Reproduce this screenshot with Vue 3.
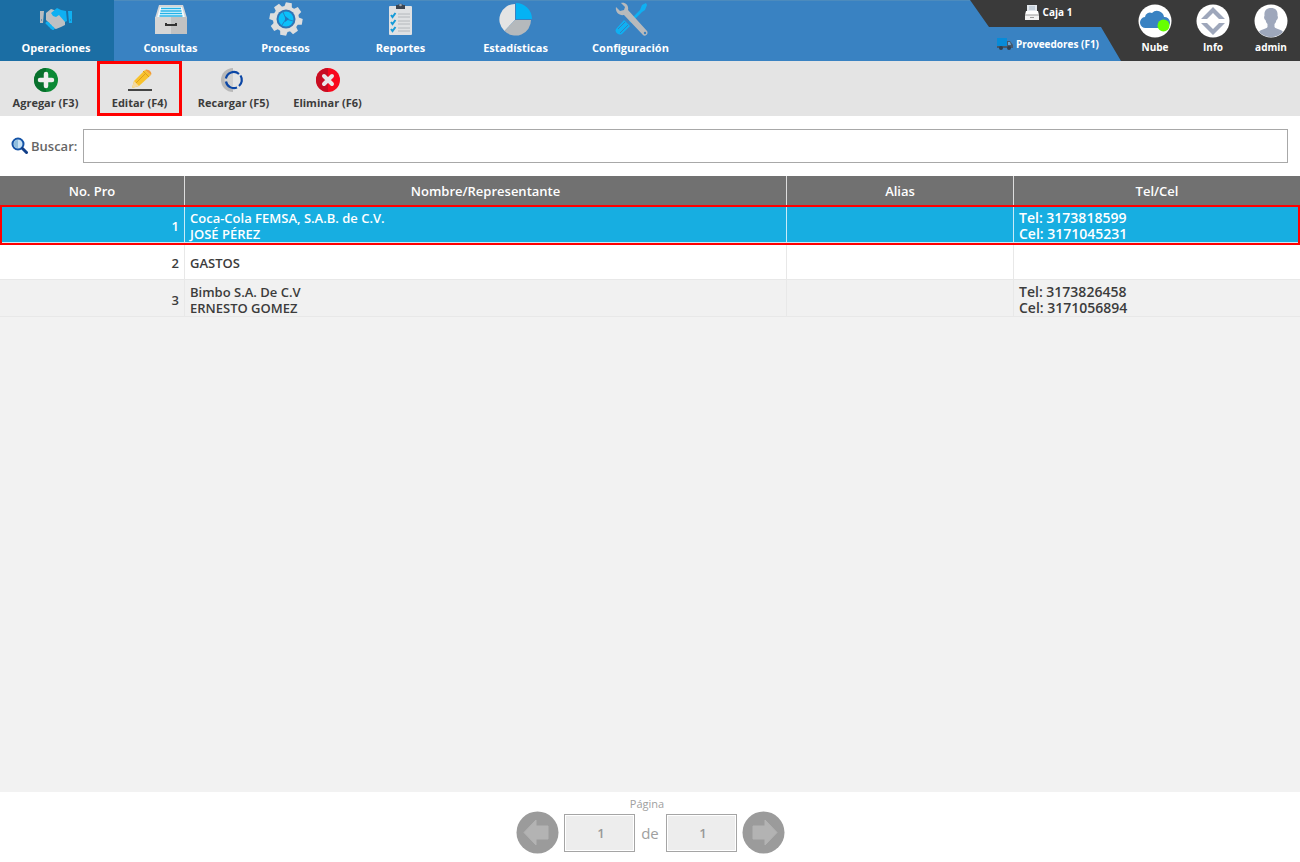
<script setup>
import { ref } from 'vue'

const query = ref('')
const menu = [
  { id: 'ops', label: 'Operaciones' },
  { id: 'con', label: 'Consultas' },
  { id: 'pro', label: 'Procesos' },
  { id: 'rep', label: 'Reportes' },
  { id: 'est', label: 'Estadísticas' },
  { id: 'cfg', label: 'Configuración' }
]
const tools = [
  { id: 'add', label: 'Agregar (F3)' },
  { id: 'edit', label: 'Editar (F4)' },
  { id: 'reload', label: 'Recargar (F5)' },
  { id: 'delete', label: 'Eliminar (F6)' }
]
const rows = [
  { no: 1, name: ['Coca-Cola FEMSA, S.A.B. de C.V.', 'JOSÉ PÉREZ'], alias: '', tel: ['Tel: 3173818599', 'Cel: 3171045231'] },
  { no: 2, name: ['GASTOS'], alias: '', tel: [] },
  { no: 3, name: ['Bimbo S.A. De C.V', 'ERNESTO GOMEZ'], alias: '', tel: ['Tel: 3173826458', 'Cel: 3171056894'] }
]
const teeth = [0, 45, 90, 135, 180, 225, 270, 315]
</script>

<template>
  <div class="app">
    <header class="top">
      <nav class="menu">
        <button v-for="m in menu" :key="m.id" type="button" class="menu-item" :class="{ active: m.id === 'ops' }">
          <svg v-if="m.id === 'ops'" class="icon" viewBox="0 0 36 36">
            <path d="M2 11h4l-1 12H2z" fill="#b8bcc0" />
            <path d="M30 11h4v12h-3z" fill="#0fb0f2" />
            <path d="M3 20h1M32 20h1" stroke="#1b6ea4" />
            <path d="M8 13l5-4 6 2 8 9v5l-4 2-5 2-3-1-5-6-2-2z" fill="#bdc0c3" />
            <path d="M13 13l6-5 4 2 5 1 1 10-2 1-6-7-3 2-3-1z" fill="#0fb0f2" />
            <path d="M9 23l1.500 1M11 25l1.500 1M13 27l2 1.500" stroke="#0fb0f2" stroke-width="3" stroke-linecap="round" />
          </svg>
          <svg v-else-if="m.id === 'con'" class="icon" viewBox="0 0 36 36">
            <path d="M6 5h24l4 13H2z" fill="#d4d6d8" />
            <path d="M7 7h22l3 11H4z" fill="#f2fbff" />
            <path d="M8 8.500h20M7.500 11h21M7 13.500h22M6.500 16h23" stroke="#23b2e8" stroke-width="1.500" />
            <path d="M2 17h32v17H2z" fill="#d6d6d6" />
            <path d="M18 17h16v17H18z" fill="#c2c2c2" />
            <path d="M13 23v2h10v-2" fill="none" stroke="#333" stroke-width="2" />
          </svg>
          <svg v-else-if="m.id === 'pro'" class="icon" viewBox="0 0 36 36">
            <g transform="translate(18 19)">
              <path v-for="t in teeth" :key="t" d="M-4-11l1-5.500h6l1 5.500z" :transform="`rotate(${t + 10})`" fill="#dedede" />
              <circle r="13" fill="#dedede" />
              <circle r="9.500" fill="#2f75b5" />
              <circle r="7.500" fill="#0bc0fa" />
              <path d="M0 0L-3-7M0 0L7 2M0 0L-4 6" stroke="#2382c4" />
              <path d="M-1-3l4 3-4 3z" fill="#2478bc" />
            </g>
          </svg>
          <svg v-else-if="m.id === 'rep'" class="icon" viewBox="0 0 36 36">
            <rect x="6" y="6" width="23" height="29" rx="1" fill="#dfe1e3" />
            <path d="M13 5h2a3 3 0 0 1 5 0h2v4h-9z" fill="#3d4550" />
            <circle cx="17.500" cy="5" r="1.300" fill="#9da6b0" />
            <path d="M15 14h12M15 17h12M15 21h12M15 24h12M15 28h12M15 31h12" stroke="#b4b8bc" />
            <path d="M8 15l1.500 2 3-4M8 22l1.500 2 3-4M8 29l1.500 2 3-4" fill="none" stroke="#159bd8" stroke-width="2" />
          </svg>
          <svg v-else-if="m.id === 'est'" class="icon" viewBox="0 0 36 36">
            <path d="M17 20V4A15.500 15.500 0 0 0 6.500 31z" fill="#e4e4e4" />
            <path d="M17 20L6.500 31A15.500 15.500 0 0 0 33 20z" fill="#b5b9bc" />
            <path d="M18 19V3a16 16 0 0 1 16 16z" fill="#04b2f4" />
          </svg>
          <svg v-else class="icon" viewBox="0 0 36 36">
            <path d="M33 3l-4 2-2 5-11 11 2 2 11-11 3-2 2-5z" fill="#0fb0f2" />
            <path d="M11 20l6 6-8 8c-3 2-8-2-6-5z" fill="#0fb0f2" />
            <path d="M12 22L5 29M15 25l-8 8" stroke="#3480bf" />
            <path d="M8 3c5-1 8 3 7 7l19 21c2 3-2 6-4 4L11 15c-5 1-9-3-8-8l4 4 4-1 1-3z" fill="#b8babc" />
            <circle cx="32" cy="33" r="1.200" fill="#3982c1" />
          </svg>
          <span>{{ m.label }}</span>
        </button>
      </nav>
      <div class="status">
        <div class="station">
          <div class="till">
            <svg width="16" height="16" viewBox="0 0 16 16">
              <path d="M3 1h10v7H3z" fill="#e3e8ee" />
              <path d="M5 3h6M5 5h6" stroke="#a9bac9" />
              <path d="M2 7h12l1 4H1z" fill="#fff" />
              <path d="M1 11h14v5H1z" fill="#f2f2f2" />
              <path d="M1 11h14M6 13.500h4" stroke="#999" />
            </svg>
            <span>Caja 1</span>
          </div>
          <div class="module">
            <svg width="16" height="14" viewBox="0 0 16 14">
              <path d="M0 1h10v9H0z" fill="#078bd8" />
              <path d="M0 9h16v2H0zM10 4h3l3 4v3h-6z" fill="#47586a" />
              <path d="M11 5h2l1 3h-3z" fill="#6ca6d4" />
              <circle cx="4" cy="11" r="2" fill="#2f3f50" />
              <circle cx="12" cy="11" r="2" fill="#2f3f50" />
            </svg>
            <span>Proveedores (F1)</span>
          </div>
        </div>
        <div class="accounts">
          <button type="button">
            <svg width="34" height="34" viewBox="0 0 34 34">
              <circle cx="17" cy="17" r="16.500" fill="#fff" />
              <path d="M8 24a5.500 5.500 0 0 1-1-11 5 5 0 0 1 7-4 7 7 0 0 1 12 4 5.500 5.500 0 0 1 1 11z" fill="#3982c2" />
              <circle cx="25.500" cy="21.500" r="6" fill="#6f0" />
            </svg>
            <span>Nube</span>
          </button>
          <button type="button">
            <svg width="34" height="34" viewBox="0 0 34 34">
              <circle cx="17" cy="17" r="16.500" fill="#fff" />
              <path d="M17 3l12 12h-6l-6-6-6 6H5zM17 31L5 19h6l6 6 6-6h6z" fill="#9ea7bb" />
            </svg>
            <span>Info</span>
          </button>
          <button type="button">
            <svg width="34" height="34" viewBox="0 0 34 34">
              <circle cx="17" cy="17" r="16.500" fill="#fff" />
              <path d="M17 4c5 0 7 3 6.500 8 1 1 0 4-1 4-.5 2-1 3-2 4v3c1 2 7 2 8.500 5a16.500 16.500 0 0 1-24 0c1.500-3 7.500-3 8.500-5v-3c-1-1-1.500-2-2-4-1 0-2-3-1-4C10 7 12 4 17 4z" fill="#9ea7bb" />
            </svg>
            <span>admin</span>
          </button>
        </div>
      </div>
    </header>

    <div class="toolbar">
      <button v-for="t in tools" :key="t.id" type="button" :class="{ marked: t.id === 'edit' }">
        <svg v-if="t.id === 'add'" width="26" height="26" viewBox="0 0 26 26">
          <circle cx="13" cy="13" r="12" fill="#0b8a35" />
          <path d="M13 1a12 12 0 0 0 0 24z" fill="#08702c" />
          <path d="M13 7v12M7 13h12" stroke="#eee" stroke-width="4.500" stroke-linecap="round" />
        </svg>
        <svg v-else-if="t.id === 'edit'" width="26" height="26" viewBox="0 0 26 26">
          <path d="M1 23h24" stroke="#444" stroke-width="2" />
          <path d="M5 21l2-7L18 3l6 5-12 11z" fill="#f8c22c" />
          <path d="M18 3c2-2 8 2 6 5z" fill="#f39c35" />
          <path d="M5 21l2-7 5 5z" fill="#f3d9a0" />
          <path d="M9 16L19 6M16 4l6 6" stroke="#dc9d1c" />
        </svg>
        <svg v-else-if="t.id === 'reload'" width="26" height="26" viewBox="0 0 26 26">
          <path d="M12 1a12 12 0 0 0 0 24z" fill="#b8b8b8" />
          <path d="M12 4.500a8.500 8.500 0 0 0 0 17z" fill="#d0d0d0" />
          <path d="M4.900 11.500a8 8 0 0 1 13.100-4.500M19.500 8.500a8 8 0 0 1-1.500 10.500M16 20.500a8 8 0 0 1-11-6" fill="none" stroke="#0b46a5" stroke-width="2.200" />
        </svg>
        <svg v-else width="26" height="26" viewBox="0 0 26 26">
          <circle cx="13" cy="13" r="12" fill="#f8081c" />
          <path d="M13 1a12 12 0 0 0 0 24z" fill="#c70d22" />
          <path d="M9 9l8 8M17 9l-8 8" stroke="#e8e8e8" stroke-width="4" stroke-linecap="round" />
        </svg>
        <span>{{ t.label }}</span>
      </button>
    </div>

    <div class="search">
      <svg width="18" height="18" viewBox="0 0 18 18">
        <circle cx="8" cy="7" r="5.500" fill="#c8e2f4" stroke="#1453a6" stroke-width="2" />
        <path d="M8 3a4 4 0 0 0 0 8z" fill="#8fbede" />
        <path d="M12.500 11.500l4 4" stroke="#123f88" stroke-width="3" stroke-linecap="round" />
      </svg>
      <label for="query">Buscar:</label>
      <input id="query" v-model="query" type="text" />
    </div>

    <main class="content">
      <table>
        <colgroup>
          <col class="col-no" />
          <col />
          <col class="col-alias" />
          <col class="col-tel" />
        </colgroup>
        <thead>
          <tr><th>No. Pro</th><th>Nombre/Representante</th><th>Alias</th><th>Tel/Cel</th></tr>
        </thead>
        <tbody>
          <tr v-for="r in rows" :key="r.no" :class="{ selected: r.no === 1 }">
            <td class="no">{{ r.no }}</td>
            <td><div v-for="n in r.name" :key="n">{{ n }}</div></td>
            <td>{{ r.alias }}</td>
            <td class="tel"><div v-for="p in r.tel" :key="p">{{ p }}</div></td>
          </tr>
        </tbody>
      </table>
    </main>

    <footer class="pager">
      <div class="caption">Página</div>
      <div class="controls">
        <button type="button" aria-label="Página anterior" disabled>
          <svg width="43" height="43" viewBox="0 0 43 43">
            <circle cx="21.500" cy="21.500" r="21" fill="#9b9b9b" />
            <path d="M8 21.500L20 9v6h12v13H20v6z" fill="#b3b3b3" stroke="#b3b3b3" stroke-linejoin="round" />
          </svg>
        </button>
        <input type="text" value="1" aria-label="Página actual" disabled />
        <span>de</span>
        <input type="text" value="1" aria-label="Total de páginas" disabled />
        <button type="button" aria-label="Página siguiente" disabled>
          <svg width="43" height="43" viewBox="0 0 43 43">
            <circle cx="21.500" cy="21.500" r="21" fill="#9b9b9b" />
            <path d="M35 21.500L23 9v6H11v13h12v6z" fill="#b3b3b3" stroke="#b3b3b3" stroke-linejoin="round" />
          </svg>
        </button>
      </div>
    </footer>
  </div>
</template>

<style>
body {
  margin: 0;
}
</style>

<style scoped>
.app {
  display: flex;
  flex-direction: column;
  min-height: 100vh;
  font-family: "Open Sans", "Noto Sans", sans-serif;
  font-size: 13px;
  color: #3c3c3c;
  background: #fff;
}
button {
  padding: 0;
  border: 0;
  background: none;
  font: inherit;
  color: inherit;
}
svg {
  display: block;
  flex: none;
}
.top {
  display: flex;
  justify-content: space-between;
  height: 61px;
  background: #3982c2;
  color: #fff;
  box-shadow: inset 0 1px #4c8bbd;
}
.menu {
  display: flex;
}
.menu-item {
  display: flex;
  flex-direction: column;
  align-items: center;
  box-sizing: border-box;
  width: 115px;
  padding-right: 2px;
  font-size: 11px;
  line-height: 16px;
  font-weight: 700;
}
.menu-item:first-child {
  width: 114px;
}
.menu-item.active {
  background: #1b6ea4;
}
.icon {
  width: 36px;
  height: 36px;
  margin-bottom: 4px;
}
.status {
  position: relative;
  display: flex;
  justify-content: space-between;
  width: 330px;
  font-weight: 700;
}
.status::before {
  content: "";
  position: absolute;
  inset: 0;
  background: #3a3a3a;
  clip-path: polygon(0 0, 19px 27px, 131px 27px, 151px 100%, 100% 100%, 100% 0);
}
.station,
.accounts {
  position: relative;
  display: flex;
}
.station {
  flex-direction: column;
  gap: 4px;
  width: 156px;
  font-size: 10px;
}
.till,
.module {
  display: flex;
  align-items: center;
  justify-content: center;
  gap: 3px;
}
.till {
  height: 24px;
}
.module {
  height: 32px;
}
.accounts button {
  display: flex;
  flex-direction: column;
  align-items: center;
  width: 58px;
  padding-top: 4px;
  font-size: 10px;
  line-height: 18px;
}
.toolbar {
  display: flex;
  gap: 9px;
  height: 55px;
  padding-left: 3px;
  background: #e4e4e4;
}
.toolbar button {
  display: flex;
  flex-direction: column;
  align-items: center;
  box-sizing: border-box;
  width: 85px;
  border: 3px solid transparent;
  padding-top: 3px;
  font-size: 11px;
  line-height: 19px;
  font-weight: 700;
  white-space: nowrap;
}
.toolbar button.marked {
  border-color: #f00;
}
.search {
  display: flex;
  align-items: center;
  gap: 3px;
  height: 60px;
  padding: 0 12px 0 10px;
}
.search label {
  width: 49px;
  color: #666;
  font-weight: 600;
}
.search input {
  flex: 1;
  box-sizing: border-box;
  height: 34px;
  padding: 0 8px;
  border: 1px solid #a8a8a8;
  font: inherit;
}
.content {
  flex: 1;
  background: #f2f2f2;
}
table {
  width: 100%;
  table-layout: fixed;
  border-collapse: separate;
  border-spacing: 0;
  font-weight: 600;
}
.col-no {
  width: 185px;
}
.col-alias {
  width: 227px;
}
.col-tel {
  width: 286px;
}
th {
  height: 30px;
  padding: 0;
  background: #717171;
  border-right: 1px solid #ddd;
  color: #fff;
  font-size: 13px;
  font-weight: 600;
}
td {
  box-sizing: border-box;
  height: 37px;
  padding: 4px 5px 0;
  border-right: 1px solid #e8e8e8;
  border-bottom: 1px solid #e8e8e8;
  line-height: 16px;
}
th:last-child,
td:last-child {
  border-right: 0;
}
tbody tr {
  background: #f1f1f1;
}
tbody tr:nth-child(even) {
  background: #fff;
}
tbody tr.selected {
  position: relative;
  background: #17aee1;
  color: #fff;
}
.selected td {
  border-color: #c8ebf8;
}
.selected .no::after {
  content: "";
  position: absolute;
  inset: -1px 0 -2px;
  border: 2px solid #f00;
}
.no {
  text-align: right;
}
.tel {
  font-size: 14px;
}
.pager {
  display: flex;
  flex-direction: column;
  align-items: center;
  height: 70px;
  color: #a0a0a0;
}
.caption {
  padding: 4px 6px 0 0;
  font-size: 11px;
  line-height: 15px;
}
.controls {
  display: flex;
  align-items: center;
  gap: 5px;
}
.controls input {
  box-sizing: border-box;
  width: 71px;
  height: 38px;
  padding: 0 0 0 4px;
  border: 1px solid #a5a5a5;
  outline: 1px solid #fff;
  outline-offset: -2px;
  background: #ededed;
  color: #999;
  font: inherit;
  font-weight: 600;
  text-align: center;
}
.controls span {
  width: 21px;
  font-size: 15px;
  text-align: center;
}
</style>
